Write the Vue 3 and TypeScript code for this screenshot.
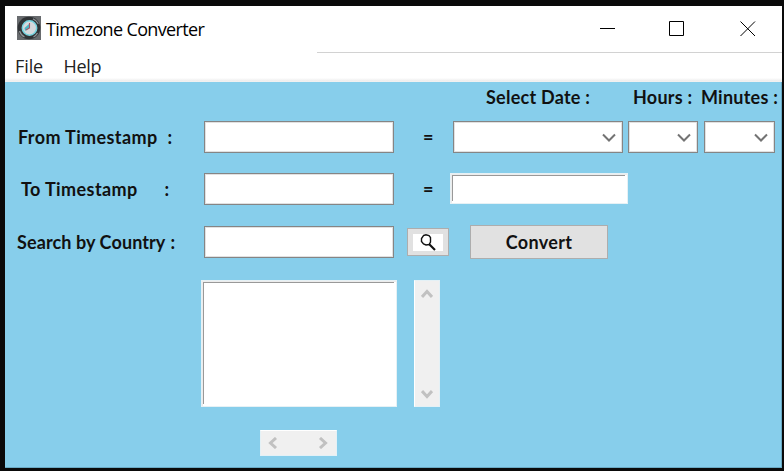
<script setup lang="ts">
import { ref } from 'vue'

const fromStamp = ref('')
const toStamp = ref('')
const country = ref('')
</script>

<template>
  <div class="desktop">
    <main class="window">
      <header class="titlebar">
        <svg class="app-icon" width="24" height="24" viewBox="0 0 24 24">
          <rect width="24" height="24" fill="#686b6e" />
          <circle cx="12" cy="12" r="11.3" fill="#303336" />
          <path d="M2.5 15a10 10 0 0 0 5 6M16 2.8a10 10 0 0 1 5.3 5M20.5 17a10 10 0 0 1-4 4" fill="none" stroke="#8d9194" stroke-width="1.3" />
          <circle cx="12.5" cy="12" r="7.2" fill="#d5d8dc" stroke="#75d3df" stroke-width="1.5" />
          <path d="M12 7v5l-4 3-.5-3 4.5-4z" fill="#4cb5c4" />
          <path d="M12.5 7v5L9 14" fill="none" stroke="#a35867" stroke-width="1.1" />
        </svg>
        <span class="title">Timezone Converter</span>
        <div class="controls">
          <svg width="16" height="16" viewBox="0 0 16 16"><path d="M0 7.5h15" /></svg>
          <svg width="16" height="16" viewBox="0 0 16 16"><path d="M.5.5h14v14H.5z" /></svg>
          <svg width="16" height="16" viewBox="0 0 16 16"><path d="M.5.5l14.5 14.5M15 .5L.5 15" /></svg>
        </div>
      </header>
      <nav class="menu"><span class="file">File</span><span class="help">Help</span></nav>
      <section class="body">
        <div class="heads">
          <span class="h-date">Select Date :</span>
          <span class="h-hours">Hours :</span>
          <span class="h-minutes">Minutes :</span>
        </div>
        <div class="row">
          <label class="label from"><span>From Timestamp</span><i>:</i></label>
          <input v-model="fromStamp" class="field" />
          <span class="equals">=</span>
          <div class="combo date"><svg width="14" height="9" viewBox="0 0 14 9"><path d="M1 1.5l6 6 6-6" /></svg></div>
          <div class="combo hours"><svg width="14" height="9" viewBox="0 0 14 9"><path d="M1 1.5l6 6 6-6" /></svg></div>
          <div class="combo minutes"><svg width="14" height="9" viewBox="0 0 14 9"><path d="M1 1.5l6 6 6-6" /></svg></div>
        </div>
        <div class="row second">
          <label class="label to"><span>To Timestamp</span><i>:</i></label>
          <input v-model="toStamp" class="field" />
          <span class="equals">=</span>
          <div class="sunken result"></div>
        </div>
        <div class="row third">
          <label class="label search"><span>Search by Country</span><i>:</i></label>
          <input v-model="country" class="field" />
          <button class="find" aria-label="Search">
            <svg width="30" height="17" viewBox="0 0 30 17">
              <rect width="30" height="17" fill="#fff" />
              <path d="M10.5 1.5L13 .8l3 .7 1.5 2v4.500l-1.500 2.500-3 .5-2.500-1-2-2.500v-3z" fill="none" stroke="#111" stroke-width="1.4" />
              <path d="M16 10l6 6" stroke="#111" stroke-width="2.1" />
            </svg>
          </button>
          <button class="convert">Convert</button>
        </div>
        <div class="results">
          <div class="sunken list"></div>
          <div class="vbar">
            <svg width="12" height="11" viewBox="0 0 12 11"><path d="M1 9l5-5.500 5 5.500" /></svg>
            <svg width="12" height="11" viewBox="0 0 12 11"><path d="M1 2l5 5.500 5-5.500" /></svg>
          </div>
        </div>
        <div class="hbar">
          <svg width="11" height="12" viewBox="0 0 11 12"><path d="M9 1L3.500 6 9 11" /></svg>
          <svg width="11" height="12" viewBox="0 0 11 12"><path d="M2 1l5.500 5L2 11" /></svg>
        </div>
      </section>
    </main>
  </div>
</template>

<style>
body { margin: 0; overflow: hidden; }
</style>

<style scoped>
* { box-sizing: border-box; }
.desktop { width: 784px; height: 471px; padding: 6px 2px 3px 5px; background: #0a0a0a; }
.window { height: 462px; overflow: hidden; background: #fff; }
.titlebar { display: flex; height: 47px; padding-left: 12px; background: linear-gradient(#d2d2d2, #d2d2d2) 312px 100% / 465px 1px no-repeat; }
.app-icon { margin-top: 10px; flex: none; }
.title { margin-left: 5px; font: 18px/47px "Open Sans", sans-serif; color: #000; letter-spacing: -.65px; white-space: nowrap; }
.controls { display: flex; gap: 54px; margin: 15px 26px 0 auto; }
.controls svg { display: block; stroke: #000; stroke-width: 1; fill: none; }
.controls svg:nth-child(1) { margin-right: -1px; }
.controls svg:nth-child(2) { margin-right: 1px; }
.menu { display: flex; height: 29px; padding-left: 10px; background: linear-gradient(#fff 25px, #ececec 28px, #f5f5f5); font: 18px/27px "Open Sans", sans-serif; color: #222; }
.file { width: 48.5px; letter-spacing: -.1px; }
.help { letter-spacing: -.3px; }
.body { height: 386px; background: #87ceeb; border: solid #69a9c3; border-width: 0 1px 1px 0; color: #111; font: 700 18px/30px Lato, sans-serif; }
.heads { display: flex; height: 38px; white-space: nowrap; letter-spacing: .24px; }
.h-date { margin-left: 481px; width: 147px; }
.h-hours { width: 68px; }
.row { display: flex; align-items: center; height: 34px; }
.second { margin-top: 18px; }
.third { margin-top: 19px; }
.label { display: flex; width: 199px; white-space: nowrap; }
.label i { font-style: normal; }
.label span { flex: none; }
.from { padding-left: 13px; }
.from span { width: 149.5px; letter-spacing: .38px; }
.to { padding-left: 16px; }
.to span { width: 143.5px; letter-spacing: .4px; }
.search { padding-left: 12px; }
.search span { width: 153.5px; letter-spacing: .1px; }
.field { width: 190px; height: 32px; padding: 0 6px; border: 1.5px solid #858585; border-radius: 0; background: #fff; box-shadow: inset 0 0 0 1px #e1e1e1; font: inherit; outline: none; }
.equals { width: 59px; padding-left: 29px; }
.combo { display: flex; align-items: center; justify-content: flex-end; height: 32px; padding-right: 6px; border: 1.5px solid #858585; background: #fff; box-shadow: inset 0 0 0 1px #e1e1e1; }
.combo svg, .vbar svg, .hbar svg { display: block; fill: none; }
.combo svg { stroke: #737373; stroke-width: 2; }
.date { width: 170px; }
.hours { width: 70px; margin-left: 5px; }
.minutes { width: 71px; margin-left: 6px; }
.sunken { border: 1px solid #e6f1f5; background: linear-gradient(#999, #999) 1px 1px / calc(100% - 3px) 1px no-repeat, linear-gradient(#999, #999) 1px 1px / 1px calc(100% - 3px) no-repeat, #fff; box-shadow: inset 1px 1px #ececec; }
.result { width: 178px; height: 31px; margin: -2px 0 0 -3px; }
.find { display: flex; align-items: center; justify-content: center; width: 42px; height: 28px; margin-left: 13px; padding: 0; border: 1.5px solid #adadad; background: #e1e1e1; }
.convert { width: 138px; height: 34px; margin-left: 21px; padding: 0; border: 1.5px solid #adadad; background: #e1e1e1; color: #111; font: inherit; letter-spacing: .3px; }
.results { display: flex; gap: 17px; margin: 21px 0 0 196px; height: 127px; }
.list { width: 196px; }
.vbar { display: flex; flex-direction: column; align-items: center; justify-content: space-between; width: 26px; padding: 7px 0 6px; border: 1px solid #e4f1f6; border-left-color: #fff; background: #f0f0f0; }
.vbar svg, .hbar svg { stroke: #c1c1c1; stroke-width: 3; }
.hbar { display: flex; align-items: center; justify-content: space-between; width: 77px; height: 26px; margin: 23px 0 0 255px; padding: 0 7px 0 6px; border: 1px solid #e4f1f6; border-top-color: #fff; background: #f0f0f0; }
</style>
